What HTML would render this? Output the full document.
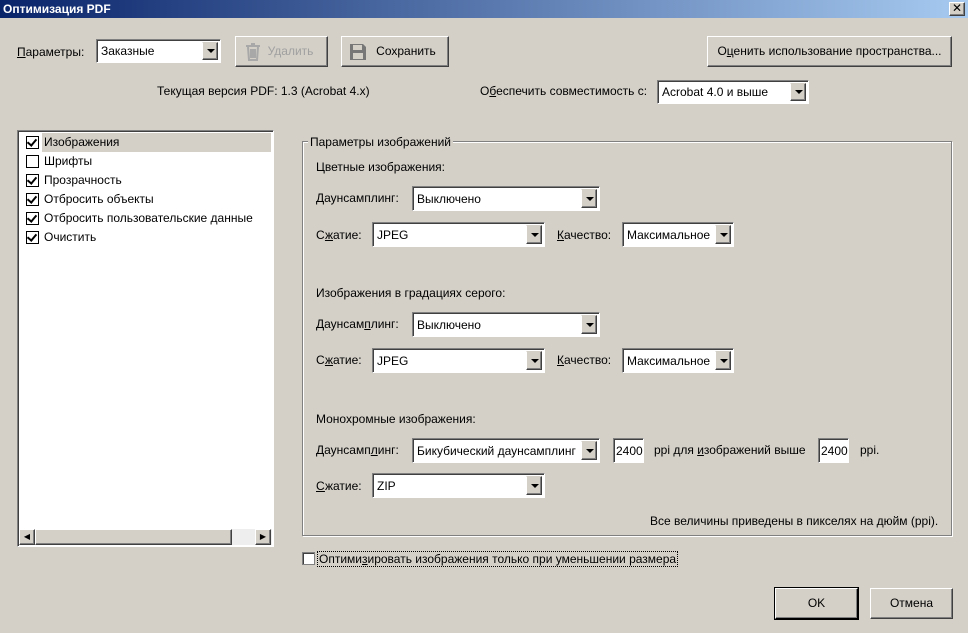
<!DOCTYPE html><html><head><meta charset="utf-8"><style>
*{box-sizing:border-box}
body{margin:0;width:968px;height:633px;background:#d4d0c8;font:12px "Liberation Sans","DejaVu Sans",sans-serif;color:#000;position:relative;overflow:hidden}
.a{position:absolute;white-space:nowrap}
.t{position:absolute;white-space:nowrap;line-height:14px}
.btn{position:absolute;background:#d4d0c8;border:1px solid;border-color:#fff #404040 #404040 #fff;box-shadow:inset -1px -1px 0 #808080;text-align:center}
.cb{position:absolute;background:#fff;border:1px solid;border-color:#808080 #fff #fff #808080;box-shadow:inset 1px 1px 0 #404040}
.cb span{position:absolute;left:4px;top:50%;transform:translateY(-50%);line-height:14px}
.cb i{position:absolute;right:2px;top:2px;bottom:2px;width:16px;background:#d4d0c8;border:1px solid;border-color:#d4d0c8 #404040 #404040 #fff;box-shadow:inset -1px -1px 0 #808080}
.cb i:after{content:"";position:absolute;left:4px;top:50%;margin-top:-2px;border-left:4px solid transparent;border-right:4px solid transparent;border-top:4px solid #000}
.chk{position:absolute;width:13px;height:13px;background:#fff;border:1px solid #000}
.chk.on:after{content:"";position:absolute;left:2px;top:0px;width:4px;height:7px;border:solid #000;border-width:0 2px 2px 0;transform:rotate(40deg)}
u{text-decoration:underline}
</style></head><body>
<div class="a" style="left:0;top:0;width:968px;height:18px;background:linear-gradient(90deg,#0a246a,#a6caf0)"></div>
<div class="t" style="left:3px;top:2px;color:#fff;font-weight:bold">Оптимизация PDF</div>
<div class="btn" style="left:949px;top:2px;width:16px;height:14px;font-size:12px;line-height:11px;font-weight:bold">✕</div>

<div class="t" style="left:17px;top:45px"><u>П</u>араметры:</div>
<div class="cb" style="left:96px;top:39px;width:125px;height:24px"><span>Заказные</span><i></i></div>
<div class="btn" style="left:235px;top:36px;width:93px;height:31px;color:#a0a0a0;line-height:28px;padding-left:18px">Удалить
<svg class="a" style="left:8px;top:5px" width="18" height="20"><g fill="none" stroke="#a8a8a8" stroke-width="2"><path d="M2 4h14M7 2h4M4 5l1 13h8l1-13M7 7v9M9 7v9M11 7v9"/></g></svg></div>
<div class="btn" style="left:341px;top:36px;width:108px;height:31px;line-height:28px;padding-left:22px">Сохранить
<svg class="a" style="left:7px;top:6px" width="18" height="18"><path d="M1 1h13l3 3v13H1z" fill="#777"/><rect x="4" y="2" width="9" height="5" fill="#d4d0c8"/><rect x="4" y="10" width="10" height="6" fill="#d4d0c8"/></svg></div>
<div class="btn" style="left:707px;top:36px;width:245px;height:31px;line-height:28px">О<u>ц</u>енить использование пространства...</div>

<div class="t" style="left:157px;top:84px">Текущая версия PDF: 1.3 (Acrobat 4.x)</div>
<div class="t" style="left:480px;top:84px">О<u>б</u>еспечить совместимость с:</div>
<div class="cb" style="left:657px;top:80px;width:152px;height:24px"><span>Acrobat 4.0 и выше</span><i></i></div>

<div class="a" style="left:17px;top:130px;width:257px;height:417px;background:#fff;border:1px solid;border-color:#808080 #fff #fff #808080;box-shadow:inset 1px 1px 0 #404040"></div>
<div class="a" style="left:42px;top:133px;width:229px;height:19px;background:#d4d0c8"></div>
<div class="chk on" style="left:26px;top:136px"></div><div class="t" style="left:44px;top:135px">Изображения</div>
<div class="chk" style="left:26px;top:155px"></div><div class="t" style="left:44px;top:154px">Шрифты</div>
<div class="chk on" style="left:26px;top:174px"></div><div class="t" style="left:44px;top:173px">Прозрачность</div>
<div class="chk on" style="left:26px;top:193px"></div><div class="t" style="left:44px;top:192px">Отбросить объекты</div>
<div class="chk on" style="left:26px;top:212px"></div><div class="t" style="left:44px;top:211px">Отбросить пользовательские данные</div>
<div class="chk on" style="left:26px;top:231px"></div><div class="t" style="left:44px;top:230px">Очистить</div>
<div class="a" style="left:19px;top:529px;width:253px;height:16px;background:#eee"></div>
<div class="btn" style="left:19px;top:529px;width:16px;height:16px;font-size:8px;line-height:14px">◀</div>
<div class="btn" style="left:35px;top:529px;width:197px;height:16px"></div>
<div class="btn" style="left:255px;top:529px;width:16px;height:16px;font-size:8px;line-height:14px">▶</div>

<div class="a" style="left:302px;top:141px;width:650px;height:395px;border:1px solid #808080;box-shadow:1px 1px 0 #fff,inset 1px 1px 0 #fff"></div>
<div class="t" style="left:308px;top:135px;background:#d4d0c8;padding:0 2px">Параметры изображений</div>

<div class="t" style="left:316px;top:160px">Цветные изображения:</div>
<div class="t" style="left:316px;top:191px"><u>Д</u>аунсамплинг:</div>
<div class="cb" style="left:412px;top:186px;width:188px;height:25px"><span>Выключено</span><i></i></div>
<div class="t" style="left:316px;top:228px">С<u>ж</u>атие:</div>
<div class="cb" style="left:372px;top:222px;width:173px;height:25px"><span>JPEG</span><i></i></div>
<div class="t" style="left:557px;top:228px"><u>К</u>ачество:</div>
<div class="cb" style="left:622px;top:222px;width:112px;height:25px"><span>Максимальное</span><i></i></div>

<div class="t" style="left:316px;top:286px">Изображения в градациях серого:</div>
<div class="t" style="left:316px;top:317px">Даунсам<u>п</u>линг:</div>
<div class="cb" style="left:412px;top:312px;width:188px;height:25px"><span>Выключено</span><i></i></div>
<div class="t" style="left:316px;top:353px">С<u>ж</u>атие:</div>
<div class="cb" style="left:372px;top:348px;width:173px;height:25px"><span>JPEG</span><i></i></div>
<div class="t" style="left:557px;top:353px"><u>К</u>ачество:</div>
<div class="cb" style="left:622px;top:348px;width:112px;height:25px"><span>Максимальное</span><i></i></div>

<div class="t" style="left:316px;top:412px">Монохромные изображения:</div>
<div class="t" style="left:316px;top:443px">Даунсамп<u>л</u>инг:</div>
<div class="cb" style="left:412px;top:438px;width:188px;height:25px"><span>Бикубический даунсамплинг</span><i></i></div>
<div class="cb" style="left:613px;top:438px;width:31px;height:25px"><span style="left:2px">2400</span></div>
<div class="t" style="left:654px;top:443px">ppi для <u>и</u>зображений выше</div>
<div class="cb" style="left:818px;top:438px;width:31px;height:25px"><span style="left:2px">2400</span></div>
<div class="t" style="left:860px;top:443px">ppi.</div>
<div class="t" style="left:316px;top:479px"><u>С</u>жатие:</div>
<div class="cb" style="left:372px;top:473px;width:173px;height:25px"><span>ZIP</span><i></i></div>
<div class="t" style="left:650px;top:514px">Все величины приведены в пикселях на дюйм (ppi).</div>

<div class="chk" style="left:302px;top:552px;border-color:#808080;box-shadow:inset 1px 1px 0 #404040"></div>
<div class="t" style="left:317px;top:551px;border:1px dotted #000;padding:0 1px">Оптими<u>з</u>ировать изображения только при уменьшении размера</div>

<div class="btn" style="left:775px;top:588px;width:83px;height:31px;line-height:28px;border-color:#fff #000 #000 #fff;outline:1px solid #000">OK</div>
<div class="btn" style="left:870px;top:588px;width:83px;height:31px;line-height:28px">Отмена</div>
</body></html>
